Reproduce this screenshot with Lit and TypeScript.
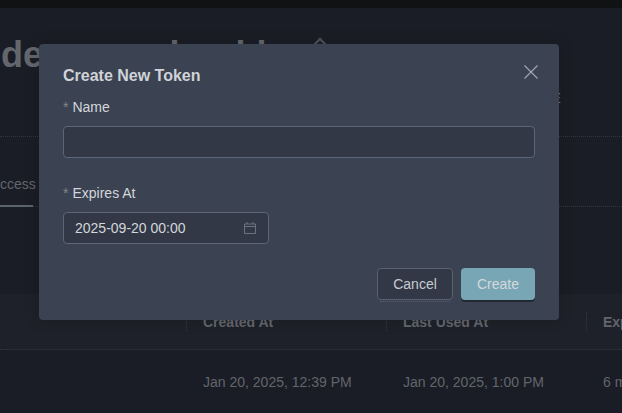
import { css, html, LitElement } from "lit";
import { customElement } from "lit/decorators.js";

@customElement("app-root")
export class AppRoot extends LitElement {
	static override styles = css`
		:host {
			display: block;
			position: relative;
			width: 622px;
			height: 413px;
			overflow: hidden;
			background: #1a1d25;
			font-family: "Liberation Sans", Arial, sans-serif;
			font-size: 14px;
			color: #62656c;
		}

		.topbar {
			height: 8px;
			background: #111214;
		}

		.head {
			height: 129px;
			box-sizing: border-box;
			border-bottom: 1px dotted #33363e;
			padding-top: 25px;
			white-space: nowrap;
		}

		.title {
			display: flex;
			align-items: flex-start;
			font-size: 36px;
			font-weight: 700;
			line-height: 44px;
			margin-left: 1px;
			color: #63666d;
		}

		.title .a {
			margin-left: 126.5px;
		}

		.title .b {
			margin-left: 56px;
		}

		.title .c {
			margin-left: 11px;
		}

		.title svg {
			width: 14px;
			height: 8px;
			margin: 4px 0 0 46px;
			color: #4a4f58;
		}

		.sub {
			margin: 13px 0 0 551.4px;
			line-height: 16px;
			color: #7a7d84;
		}

		.tabs {
			height: 70px;
			box-sizing: border-box;
			border-bottom: 1px dotted #33363e;
			position: relative;
			padding-top: 39px;
			line-height: 16px;
			white-space: nowrap;
		}

		.tab {
			margin-left: -9.4px;
		}

		.tab-line {
			position: absolute;
			left: 0;
			bottom: -1px;
			width: 33px;
			height: 2px;
			background: #59646b;
		}

		.gap {
			height: 87px;
		}

		.thead {
			height: 56px;
			box-sizing: border-box;
			background: #1e2129;
			border-bottom: 1px dotted #33363e;
			display: grid;
			grid-template-columns: 186px 200px 200px 1fr;
			align-items: end;
			font-weight: 700;
			padding-bottom: 17px;
			white-space: nowrap;
		}

		.thead span {
			padding-left: 16px;
			border-left: 1px dotted #33363e;
			line-height: 20px;
		}

		.thead span:first-child {
			border: 0;
		}

		.row {
			display: grid;
			grid-template-columns: 187px 200px 200px 1fr;
			padding-top: 23px;
			line-height: 18px;
			white-space: nowrap;
		}

		.row span {
			padding-left: 16px;
		}

		.dialog {
			position: absolute;
			left: 39px;
			top: 44px;
			width: 520px;
			height: 276px;
			box-sizing: border-box;
			padding: 22px 24px 0;
			border-radius: 4px;
			background: #3b4251;
			box-shadow: 0 0 16px rgba(0, 0, 0, 0.14);
			color: #d3d6da;
		}

		.dialog h2 {
			margin: 0;
			font-size: 16px;
			line-height: 20px;
			font-weight: 700;
			color: #d0d3d8;
		}

		.close {
			position: absolute;
			right: 20px;
			top: 20px;
			width: 16px;
			height: 16px;
			color: #a3a8b2;
		}

		label {
			display: block;
			line-height: 20px;
			height: 20px;
		}

		label i {
			font-style: normal;
			color: #81858e;
			margin-right: 4px;
		}

		.name-label {
			margin-top: 11px;
		}

		.input {
			margin-top: 9px;
			height: 32px;
			box-sizing: border-box;
			border: 1px solid #5d6579;
			border-radius: 4px;
			background: #323846;
		}

		.date-label {
			margin-top: 25px;
		}

		.date {
			width: 206px;
			display: flex;
			align-items: center;
			justify-content: space-between;
			padding: 0 11px;
			color: #d3d6da;
		}

		.date svg {
			width: 14px;
			height: 14px;
			color: #6b7280;
		}

		.actions {
			display: flex;
			justify-content: flex-end;
			gap: 8px;
			margin-top: 24px;
		}

		button {
			height: 32px;
			box-sizing: border-box;
			border-radius: 4px;
			font: inherit;
			padding: 0;
		}

		.cancel {
			position: relative;
			width: 76px;
			border: 1px solid #5a6073;
			background: #323846;
			color: #c8cbd1;
		}

		.cancel::after {
			content: "";
			position: absolute;
			left: 2px;
			right: 2px;
			bottom: -3px;
			border-bottom: 1px dotted #565c6c;
		}

		.create {
			width: 74px;
			border: 0;
			background: #78a6b5;
			color: #d3d8dc;
			box-shadow: 0 2px 0 #23272f;
		}
	`;

	override render() {
		return html`
			<div class="topbar"></div>
			<div class="head">
				<div class="title">
					<span>de</span><span class="a">l</span><span class="b">l</span><span class="c">l</span>
					<svg viewBox="0 0 14 8" fill="none" stroke="currentColor" stroke-width="2.4">
						<path d="M1 8l6-6 6 6" />
					</svg>
				</div>
				<div class="sub">E</div>
			</div>
			<div class="tabs">
				<span class="tab">Access</span>
				<div class="tab-line"></div>
			</div>
			<div class="gap"></div>
			<div class="thead">
				<span></span><span>Created At</span><span>Last Used At</span><span>Expires At</span>
			</div>
			<div class="row">
				<span></span><span>Jan 20, 2025, 12:39 PM</span><span>Jan 20, 2025, 1:00 PM</span><span>6 months</span>
			</div>
			<div class="dialog">
				<h2>Create New Token</h2>
				<svg class="close" viewBox="0 0 16 16" fill="none" stroke="currentColor" stroke-width="1.1">
					<path d="M1.5 1.5l13 13M14.5 1.5l-13 13" />
				</svg>
				<label class="name-label"><i>*</i>Name</label>
				<div class="input"></div>
				<label class="date-label"><i>*</i>Expires At</label>
				<div class="input date">
					<span>2025-09-20 00:00</span>
					<svg viewBox="0 0 14 14" fill="none" stroke="currentColor">
						<path d="M1.5 3h11v9.5h-11zM1.5 5.5h11M4 1v2M10 1v2" />
					</svg>
				</div>
				<div class="actions">
					<button class="cancel">Cancel</button>
					<button class="create">Create</button>
				</div>
			</div>
		`;
	}
}
